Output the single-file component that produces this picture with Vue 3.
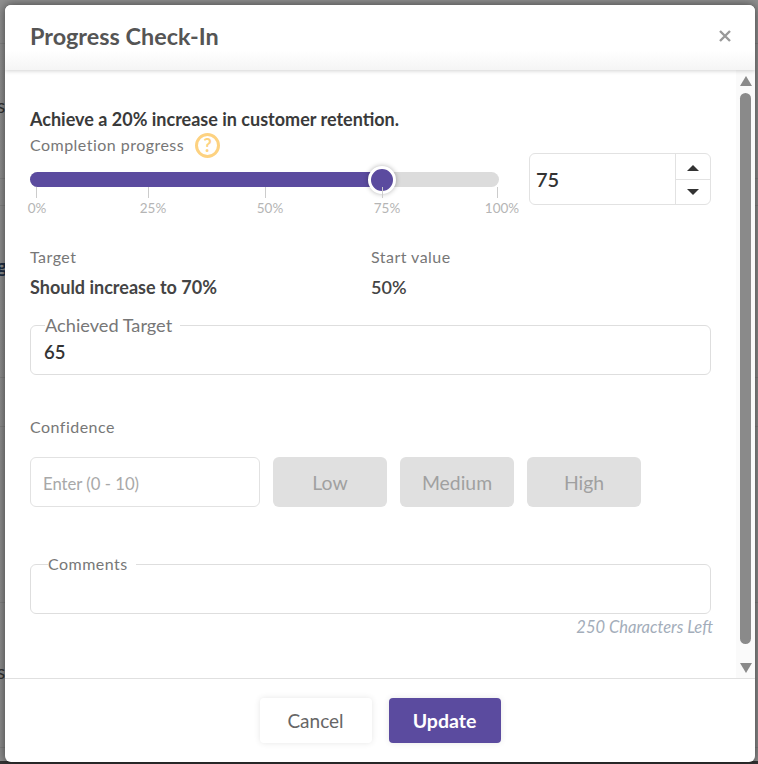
<script setup>
const ticks = [
  { label: '0%', left: 5.5, textLeft: 7 },
  { label: '25%', left: 118, textLeft: 123 },
  { label: '50%', left: 235, textLeft: 240 },
  { label: '75%', left: 352, textLeft: 357 },
  { label: '100%', left: 467, textLeft: 472 }
]
const levels = ['Low', 'Medium', 'High']
const backLines = [43, 178, 205, 377, 426, 602, 747]
</script>

<template>
  <div class="backdrop">
    <i v-for="y in backLines" :key="y" class="back-line" :style="{ top: y + 'px' }"></i>
    <span class="peek peek-a">s</span>
    <span class="peek peek-b">g</span>
    <span class="peek peek-c">s</span>
    <div class="modal">
      <header class="head">
        <h1>Progress Check-In</h1>
        <svg class="close" width="14" height="14" viewBox="0 0 14 14">
          <path d="M2 2 L12 12 M12 2 L2 12" stroke="#999" stroke-width="2.4" fill="none" />
        </svg>
      </header>

      <div class="middle">
        <main class="content">
          <h2 class="goal">Achieve a 20% increase in customer retention.</h2>
          <div class="progress-row">
            <div class="slider-col">
              <div class="label-row">
                <span class="muted">Completion progress</span>
                <span class="help">?</span>
              </div>
              <div class="track">
                <div class="fill"></div>
                <div class="thumb"></div>
              </div>
              <div class="scale">
                <template v-for="t in ticks" :key="t.label">
                  <i class="tick" :style="{ left: t.left + 'px' }"></i>
                  <span class="tick-label" :style="{ left: t.textLeft + 'px' }">{{ t.label }}</span>
                </template>
              </div>
            </div>
            <div class="stepper">
              <span class="stepper-value">75</span>
              <div class="stepper-btns">
                <div class="step"><i class="tri up"></i></div>
                <div class="step"><i class="tri down"></i></div>
              </div>
            </div>
          </div>

          <div class="facts">
            <div class="fact fact-target">
              <div class="muted">Target</div>
              <div class="fact-value">Should increase to 70%</div>
            </div>
            <div class="fact">
              <div class="muted">Start value</div>
              <div class="fact-value">50%</div>
            </div>
          </div>

          <fieldset class="box achieved">
            <legend>Achieved Target</legend>
            <span class="achieved-value">65</span>
          </fieldset>

          <div class="muted confidence-label">Confidence</div>
          <div class="confidence">
            <div class="conf-input">Enter (0 - 10)</div>
            <button v-for="l in levels" :key="l" class="level">{{ l }}</button>
          </div>

          <fieldset class="box comments">
            <legend>Comments</legend>
          </fieldset>
          <div class="chars">250 Characters Left</div>
        </main>

        <aside class="scrollbar">
          <i class="sb-arrow sb-up"></i>
          <div class="sb-thumb"></div>
          <i class="sb-arrow sb-down"></i>
        </aside>
      </div>

      <footer class="foot">
        <button class="btn cancel">Cancel</button>
        <button class="btn update">Update</button>
      </footer>
    </div>
  </div>
</template>

<style scoped>
.backdrop {
  position: relative;
  width: 758px;
  height: 764px;
  box-sizing: border-box;
  padding: 5px 3px 2px 5px;
  background: linear-gradient(#8f8f8f 0, #8c8c8c 99.6%, #333 99.6%);
  overflow: hidden;
  font-family: Lato, "Open Sans", sans-serif;
}
.back-line { position: absolute; left: 0; right: 0; height: 1px; background: rgba(0, 0, 0, .08); }
.peek { position: absolute; left: -3px; font-size: 19px; color: #333; }
.peek-a { top: 94px; }
.peek-b { top: 254px; font-weight: 700; color: #1f2f45; }
.peek-c { top: 660px; }
.modal {
  position: relative;
  height: 757px;
  background: #fff;
  border-radius: 6px;
  display: flex;
  flex-direction: column;
  overflow: hidden;
  box-shadow: 0 0 10px rgba(0, 0, 0, .55);
}
.head {
  height: 65px;
  flex: none;
  box-sizing: border-box;
  padding: 0 23px 0 25px;
  display: flex;
  align-items: center;
  justify-content: space-between;
  background: linear-gradient(#fff 70%, #f5f5f5);
  box-shadow: 0 1px 4px rgba(0, 0, 0, .18);
  position: relative;
}
h1 { margin: 0 0 3px; font-size: 23.4px; font-weight: 700; color: #555; }
.close { margin-bottom: 3px; }
.middle { flex: 1; display: flex; min-height: 0; }
.content { flex: 1; padding: 38px 25px 0 25px; min-width: 0; }
.goal { margin: 0; font-size: 18px; line-height: 22px; font-weight: 700; color: #3a3a3a; }
.muted { font-size: 16px; line-height: 18px; color: #777; letter-spacing: .47px; }
.progress-row { display: flex; align-items: flex-start; gap: 30px; }
.slider-col { width: 469px; flex: none; }
.label-row { display: flex; align-items: center; gap: 11px; height: 26px; margin-top: 2px; }
.help {
  width: 25px; height: 25px; box-sizing: border-box;
  border: 3px solid #fdd281; border-radius: 50%;
  color: #fdd281; font-size: 18px; font-weight: 700;
  display: flex; align-items: center; justify-content: center;
}
.track {
  position: relative; height: 15px; margin-top: 14px;
  border-radius: 8px; background: #dcdcdc;
}
.fill {
  position: absolute; left: 0; top: 0; bottom: 0; width: 352px;
  background: #5b4b9f; border-radius: 8px 0 0 8px;
}
.thumb {
  position: absolute; left: 338px; top: -6px;
  width: 28px; height: 28px; box-sizing: border-box;
  border-radius: 50%; background: #5b4b9f; border: 3px solid #fff;
  box-shadow: 0 0 5px rgba(0, 0, 0, .3);
}
.scale { position: relative; height: 30px; }
.tick { position: absolute; top: 0; width: 1px; height: 11px; background: #ccc; }
.tick-label {
  position: absolute; top: 12px; transform: translateX(-50%);
  font-size: 13.5px; line-height: 18px; color: #b5b5b5;
}
.stepper {
  width: 182px; height: 52px; flex: none; margin-top: 23px;
  box-sizing: border-box; border: 1px solid #e2e2e2; border-radius: 6px;
  display: flex; align-items: center; justify-content: space-between;
  overflow: hidden;
}
.stepper-value { padding-left: 6px; font-size: 20px; font-weight: 600; color: #333; }
.stepper-btns { width: 34px; height: 100%; border-left: 1px solid #e2e2e2; display: flex; flex-direction: column; }
.step { flex: 1; display: flex; align-items: center; justify-content: center; }
.step + .step { border-top: 1px solid #e2e2e2; }
.tri { width: 0; height: 0; border-left: 6px solid transparent; border-right: 6px solid transparent; }
.tri.up { border-bottom: 6px solid #333; margin-top: 4px; }
.tri.down { border-top: 6px solid #333; }
.facts { display: flex; margin-top: 30px; }
.fact-target { width: 341px; }
.fact .muted { line-height: 20px; }
.fact-value { margin-top: 9px; font-size: 18px; line-height: 22px; font-weight: 700; color: #444; }
.fact:last-child .fact-value { font-weight: 600; }
.box {
  margin: 0; padding: 0 14px; min-width: 0;
  border: 1px solid #dedede; border-radius: 6px;
  box-sizing: border-box;
}
.achieved { margin-top: 16px; height: 61px; }
.achieved legend { padding: 0 8px 0 0; font-size: 18.2px; line-height: 22px; color: #777; }
.achieved-value { font-size: 18.5px; font-weight: 600; color: #333; display: block; line-height: 22px; margin: 5px 0 0 -1px; }
.confidence-label { margin-top: 43px; }
.confidence { display: flex; gap: 13px; margin-top: 21px; }
.conf-input {
  width: 230px; height: 50px; box-sizing: border-box;
  border: 1px solid #e2e2e2; border-radius: 6px;
  padding: 3px 12px 0; display: flex; align-items: center;
  font-size: 16.7px; color: #a8a8a8;
}
.level {
  width: 114px; height: 50px; border: 0; border-radius: 6px;
  background: #e0e0e0; color: #a0a0a0;
  font: 400 19.4px Lato, "Open Sans", sans-serif; padding: 0;
}
.comments { margin-top: 48px; height: 59px; padding: 0 17px; }
.comments legend { padding: 0 8px 0 0; font-size: 16px; line-height: 18px; color: #777; letter-spacing: .47px; }
.chars { margin-top: 4px; text-align: right; font-size: 16.5px; line-height: 18px; font-style: italic; color: #a3adba; margin-right: -2px; }
.scrollbar {
  width: 19px; flex: none;
  background: #fafafa;
  display: flex; flex-direction: column; align-items: center;
  padding: 6px 0 5px; box-sizing: border-box;
}
.sb-arrow { width: 0; height: 0; border-left: 6.5px solid transparent; border-right: 6.5px solid transparent; flex: none; }
.sb-up { border-bottom: 10px solid #8a8a8a; }
.sb-down { border-top: 10px solid #8a8a8a; }
.sb-thumb { flex: 1; width: 11px; margin: 7px 0 19px; background: #8a8a8a; border-radius: 6px; }
.foot {
  height: 84px; flex: none; box-sizing: border-box;
  border-top: 1px solid #e0e0e0;
  display: flex; justify-content: center; gap: 17px; padding-top: 19px;
}
.btn {
  width: 112px; height: 45px; border: 0; border-radius: 4px;
  font: 400 19px Lato, "Open Sans", sans-serif;
  box-shadow: 0 0 6px rgba(0, 0, 0, .1); padding: 0;
}
.cancel { background: #fff; color: #666; }
.update { background: #5b4b9f; color: #fff; font-weight: 700; font-size: 19.5px; }
</style>
